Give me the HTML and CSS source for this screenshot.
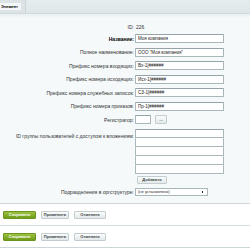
FILE: index.html
```html
<!DOCTYPE html>
<html>
<head>
<meta charset="utf-8">
<link rel="stylesheet" href="styles.css">
</head>
<body>
<div class="tabs">
  <div class="tab-cell"><span class="tab">Элемент</span></div>
</div>
<div class="panel">
  <div class="form">
    <div class="lbl id-row">ID:</div><div class="val id-row">226</div>
    <div class="lbl b">Название:</div><div class="val"><span class="inp">Моя компания</span></div>
    <div class="lbl">Полное наименование:</div><div class="val"><span class="inp">ООО "Моя компания"</span></div>
    <div class="lbl">Префикс номера входящих:</div><div class="val"><span class="inp">Вх-1[######</span></div>
    <div class="lbl">Префикс номера исходящих:</div><div class="val"><span class="inp">Исх-1[######</span></div>
    <div class="lbl">Префикс номера служебных записок:</div><div class="val"><span class="inp">СЗ-1[######</span></div>
    <div class="lbl">Префикс номера приказов:</div><div class="val"><span class="inp">Пр-1[######</span></div>
    <div class="lbl">Регистратор:</div><div class="val reg"><span class="inp small"></span><span class="btn dots">...</span></div>
    <div class="lbl top">ID группы пользователей с доступом к вложениям:</div>
    <div class="val stack">
      <span class="inp"></span><span class="inp"></span><span class="inp"></span><span class="inp"></span><span class="inp"></span>
      <span class="btn add">Добавить</span>
    </div>
    <div class="lbl">Подразделения в оргструктуре:</div><div class="val"><span class="sel">(не установлено)<i class="arr"></i></span></div>
  </div>
</div>
<div class="bar">
  <span class="btn green">Сохранить</span><span class="btn">Применить</span><span class="btn">Отменить</span>
</div>
<div class="bar last">
  <span class="btn green">Сохранить</span><span class="btn">Применить</span><span class="btn">Отменить</span>
</div>
</body>
</html>
```

FILE: styles.css
```css
html, body { margin: 0; padding: 0; }
body {
  width: 250px; height: 250px; overflow: hidden;
  background: #fff;
  font-family: "Liberation Sans", Arial, sans-serif;
  font-size: 5px;
  color: #000;
}
.tabs {
  height: 14px;
  background: linear-gradient(#e6edef, #dde6e8);
  border-bottom: 1px solid #cfdadd;
  box-sizing: border-box;
  display: flex;
}
.tab-cell {
  width: 26px;
  background: #dce4e6;
  border-right: 1px solid #ccd6d9;
  box-sizing: border-box;
  padding-top: 3px;
}
.tab {
  display: block;
  width: 21px;
  height: 7px;
  line-height: 7px;
  background: #f4f7f8;
  font-size: 4px;
  font-weight: bold;
  padding-left: 1px;
  box-sizing: border-box;
}
.panel {
  height: 190px;
  background: linear-gradient(#e9f0f2 0, #f5f9fa 4px, #f5f9fa 100%);
  border-bottom: 1px solid #cdd8db;
  box-sizing: border-box;
  padding-top: 9.5px;
}
.form {
  display: grid;
  grid-template-columns: 134px 1fr;
  column-gap: 1px;
  row-gap: 4.5px;
  align-items: center;
}
.lbl { text-align: right; color: #333; white-space: nowrap; }
.lbl.b { font-weight: bold; color: #000; }
.lbl.top { align-self: start; margin-top: 4px; }
.id-row { height: 6px; line-height: 6px; }
.val.id-row { padding-left: 1px; color: #333; }
.val { display: flex; align-items: center; }
.inp {
  display: block;
  width: 89px; height: 9px;
  box-sizing: border-box;
  border: 1px solid #a9b7bb;
  border-top-color: #95a4a8;
  background: #fff;
  border-radius: 1px;
  padding-left: 2px;
  line-height: 7px;
  font-size: 4.5px;
  color: #222;
}
.inp.small { width: 16px; }
.stack { flex-direction: column; align-items: flex-start; }
.stack .inp { border-top-width: 0; }
.stack .inp:first-child { border-top-width: 1px; }
.btn {
  display: inline-block;
  height: 8px;
  line-height: 6px;
  box-sizing: border-box;
  border: 1px solid #c3ccce;
  border-radius: 1px;
  background: linear-gradient(#fbfcfc, #e3e9ea);
  font-size: 4px;
  font-weight: bold;
  color: #3c4446;
  padding: 0 4px;
  text-align: center;
}
.dots { width: 12px; height: 9px; margin-left: 4px; padding: 0; line-height: 7px; }
.add { width: 30px; margin-top: 2px; margin-left: 2px; padding: 0; }
.sel {
  position: relative;
  display: block;
  width: 73px; height: 8px;
  box-sizing: border-box;
  border: 1px solid #a9b7bb;
  background: #fff;
  padding-left: 2px;
  line-height: 6px;
  font-size: 4px;
  color: #222;
}
.arr {
  position: absolute; right: 4px; top: 2px;
  width: 1.5px; height: 2px; background: #222;
}
.bar {
  height: 22px;
  box-sizing: border-box;
  border-bottom: 1px solid #d6e0e2;
  padding: 7px 0 0 3px;
  display: flex;
  gap: 5px;
}
.bar .btn { width: 28px; padding: 0; }
.bar .btn:nth-child(3) { width: 32px; }
.bar .btn.green {
  width: 33px;
  background: linear-gradient(#9cc23f, #6f9c1a);
  border-color: #6c9520;
  color: #fff;
}
.bar.last { border-bottom-color: #ccd6d9; }
```
